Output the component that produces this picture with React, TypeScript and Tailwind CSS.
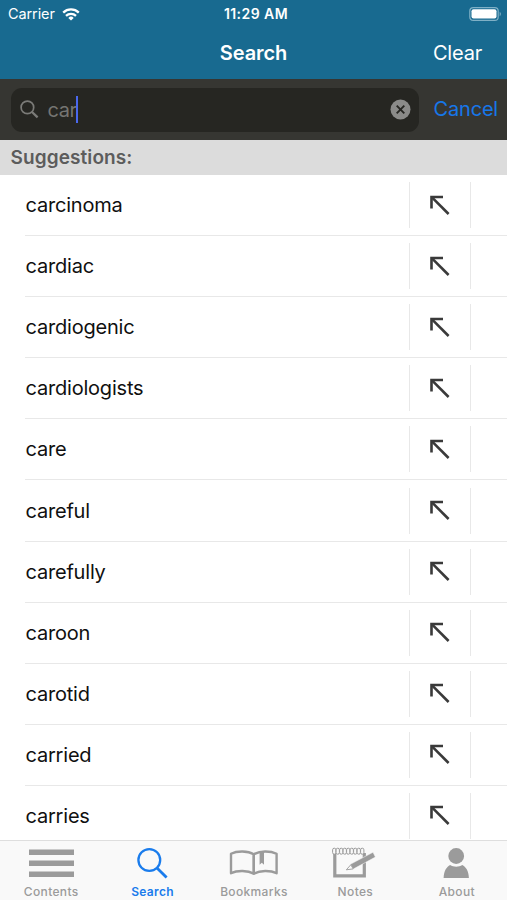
import type { ReactNode } from "react";

const suggestions = [
  "carcinoma",
  "cardiac",
  "cardiogenic",
  "cardiologists",
  "care",
  "careful",
  "carefully",
  "caroon",
  "carotid",
  "carried",
  "carries",
];

export default function App() {
  return (
    <div className="flex h-[900px] w-[507px] flex-col overflow-hidden bg-white font-['Inter',sans-serif]">
      <header className="h-[79px] shrink-0 bg-[#186a90] text-white">
        <StatusBar />
        <div className="grid h-[49px] grid-cols-3 items-center">
          <span />
          <h1 className="text-center text-[20px] leading-[24px] font-semibold tracking-[-0.1px]">
            Search
          </h1>
          <button className="justify-self-end pr-[25px] text-[20px] leading-[24px] tracking-[-0.2px]">
            Clear
          </button>
        </div>
      </header>

      <SearchBar />

      <h2 className="h-[35px] shrink-0 bg-[#dcdcdc] pl-[10.5px] text-[19px] leading-[35px] font-semibold tracking-[0.1px] text-[#5c5c5c]">
        Suggestions:
      </h2>

      <ul className="min-h-0 flex-1 overflow-hidden">
        {suggestions.map((word) => (
          <SuggestionRow key={word} word={word} />
        ))}
      </ul>

      <TabBar />
    </div>
  );
}

function StatusBar() {
  return (
    <div className="grid h-[28px] grid-cols-3 items-center pr-[5px] pl-[8px]">
      <div className="flex items-center gap-[7px] text-[14.5px] leading-[18px] tracking-[-0.1px]">
        Carrier
        <svg width="18" height="13" viewBox="0 0 18 13" fill="none" stroke="white" strokeWidth="2.3">
          <path d="M1.2 4.6a11.2 11.2 0 0 1 15.6 0" />
          <path d="M4 7.9a7.2 7.2 0 0 1 10 0" />
          <path d="M9 12.6 6.3 9.9a3.9 3.9 0 0 1 5.4 0Z" fill="white" stroke="none" />
        </svg>
      </div>
      <span className="pl-[2px] text-center text-[14px] leading-[18px] font-semibold tracking-[0.45px] whitespace-nowrap">
        11:29 AM
      </span>
      <svg className="justify-self-end" width="33" height="15" viewBox="0 0 33 15">
        <rect x="0.8" y="0.6" width="28.4" height="12.8" rx="3.5" fill="none" stroke="#7fb0c6" strokeWidth="1.2" />
        <rect x="2.5" y="2.2" width="25" height="9.4" rx="2" fill="white" />
        <path d="M30.7 4.8c1.6.8 1.6 3.6 0 4.4Z" fill="#7fb0c6" />
      </svg>
    </div>
  );
}

function SearchBar() {
  return (
    <div className="flex h-[61px] shrink-0 items-center bg-[#363632] pr-[9px] pl-[11px]">
      <div className="flex h-[44px] w-[408px] items-center rounded-[11px] bg-[#262622] pr-[8px] pl-[9px]">
        <svg width="19" height="19" viewBox="0 0 19 19" fill="none" stroke="#7b7b78" strokeWidth="1.7">
          <circle cx="7.4" cy="7.4" r="6.3" />
          <path d="m12 12 5.6 5.4" strokeWidth="2.3" />
        </svg>
        <span className="ml-[8.5px] text-[20px] leading-[26px] tracking-[-0.4px] text-[#757572]">car</span>
        <span className="-ml-px h-[27px] w-[2.5px] bg-[#4a68ee]" />
        <svg className="ml-auto" width="21" height="21" viewBox="0 0 21 21">
          <circle cx="10.5" cy="10.5" r="10" fill="#8b8b89" />
          <path d="m6.7 6.7 7.6 7.6m0-7.6-7.6 7.6" stroke="#262622" strokeWidth="1.9" />
        </svg>
      </div>
      <button className="ml-auto pb-px text-[20px] leading-[24px] tracking-[-0.2px] text-[#1677ea]">
        Cancel
      </button>
    </div>
  );
}

function SuggestionRow({ word }: { word: string }) {
  return (
    <li className="flex h-[61.1px] flex-col pl-[25px]">
      <div className="flex flex-1 items-center">
        <span className="flex-1 pl-[0.5px] text-[20px] leading-[26px] tracking-[-0.2px] text-[#101010]">{word}</span>
        <span className="flex h-[46px] w-[62px] items-center justify-center border-x border-[#e8e8e8]">
          <svg className="mb-px" width="20" height="20" viewBox="0 0 20 20" fill="none" stroke="#3a3a3a" strokeWidth="2.6">
            <path d="M1.5 13.6V2h11.5" />
            <path d="m2 2.4 16.6 16.6" />
          </svg>
        </span>
        <span className="w-[36px]" />
      </div>
      <div className="h-px bg-[#e8e8e8]" />
    </li>
  );
}

function TabBar() {
  return (
    <nav className="grid h-[60px] shrink-0 grid-cols-5 border-t border-[#dedede] bg-[#f9f9f9]">
      <Tab label="Contents">
        <path d="M3 6.3h45M3 17.3h45M3 28.3h45" stroke="currentColor" strokeWidth="5.6" />
      </Tab>
      <Tab label="Search" active>
        <g fill="none" stroke="currentColor">
          <circle cx="21.3" cy="14" r="10.9" strokeWidth="2.3" />
          <path d="m29 22 9.6 9.6" strokeWidth="2.8" />
        </g>
      </Tab>
      <Tab label="Bookmarks">
        <g fill="none" stroke="currentColor" strokeWidth="2.4" strokeLinejoin="round">
          <path d="M24.8 8.2C18.8 4.600 8 4.600 2 7.800v19.400c6.300-3 16.800-2.900 22.800.4Z" />
          <path d="M24.800 8.200C30.800 4.600 41.300 4.600 47.600 7.800v19.400c-6.300-3-16.800-2.900-22.800.4Z" />
        </g>
        <path d="M30.600 6h4.400v12.700l-2.200-2-2.200 2Z" fill="currentColor" />
      </Tab>
      <Tab label="Notes">
        <path d="M4.800 7.500v22.400h29.500V7" fill="none" stroke="currentColor" strokeWidth="3.200" />
        <g fill="#f9f9f9" stroke="currentColor" strokeWidth="1">
          <rect x="2.600" y="2.200" width="3.300" height="6" rx="1.600" />
          <rect x="6.100" y="2.200" width="3.300" height="6" rx="1.600" />
          <rect x="9.600" y="2.200" width="3.300" height="6" rx="1.600" />
          <rect x="13.100" y="2.200" width="3.300" height="6" rx="1.600" />
          <rect x="16.600" y="2.200" width="3.300" height="6" rx="1.600" />
          <rect x="20.100" y="2.200" width="3.300" height="6" rx="1.600" />
          <rect x="23.600" y="2.200" width="3.300" height="6" rx="1.600" />
          <rect x="27.100" y="2.200" width="3.300" height="6" rx="1.600" />
          <rect x="30.600" y="2.200" width="3.300" height="6" rx="1.600" />
        </g>
        <path d="m20.300 18.300 22.700-12 2.400 4.800-22.200 12Z" fill="currentColor" stroke="#f9f9f9" strokeWidth="0.500" />
        <path d="m20.800 18.800-4.500 5 6.900-.9Z" fill="#f9f9f9" stroke="currentColor" strokeWidth="0.900" />
      </Tab>
      <Tab label="About">
        <circle cx="24.200" cy="10" r="7.900" fill="currentColor" />
        <path d="M11.600 32c.3-7.200 3.200-11.300 6.500-12.900 3.400 2.200 8.800 2.200 12.200 0 3.400 1.600 6.300 5.700 6.600 12.900Z" fill="currentColor" />
      </Tab>
    </nav>
  );
}

function Tab({ label, active, children }: { label: string; active?: boolean; children: ReactNode }) {
  return (
    <button
      className={`flex flex-col items-center pt-[5px] ${active ? "font-semibold text-[#1a7cec]" : "font-medium text-[#9b9b9b]"}`}
    >
      <svg width="49" height="36" viewBox="0 0 49 36">
        {children}
      </svg>
      <span className="mt-[2px] pl-px text-[12px] leading-[15px] tracking-[0.35px]">{label}</span>
    </button>
  );
}
